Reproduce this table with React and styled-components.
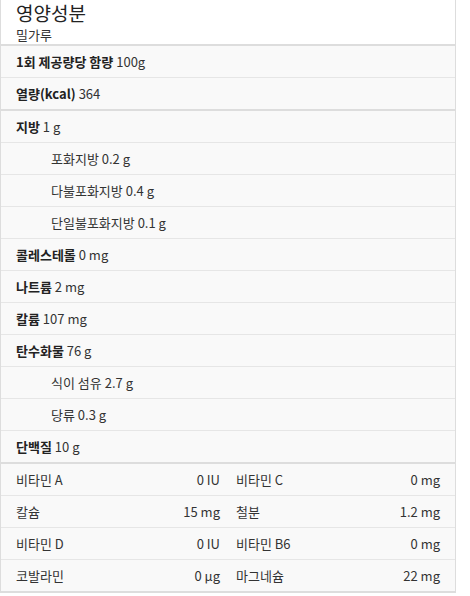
import React from "react";
import styled, { createGlobalStyle } from "styled-components";

const GlobalStyle = createGlobalStyle`
    body {
        margin: 0;
        background: #fff;
        font-family: "Noto Sans CJK KR", "Noto Sans", sans-serif;
        color: #333;
    }
`;

const Panel = styled.section`
    width: 456px;
    box-sizing: border-box;
    border-left: 1px solid #ddd;
    border-right: 1px solid #ddd;
    font-size: 13px;
`;

const Header = styled.header`
    display: flex;
    flex-direction: column;
    height: 46px;
    box-sizing: border-box;
    padding: 0 15px;
    background: #fff;
    border-bottom: 2px solid #ddd;

    h1 {
        margin: 0;
        font-size: 19px;
        font-weight: 400;
        line-height: 26px;
        color: #222;
    }

    p {
        margin: 0;
        font-size: 13px;
        line-height: 18px;
        color: #333;
    }
`;

const Section = styled.div`
    background: #f9f9f9;
    border-bottom: 2px solid #ddd;
`;

const Row = styled.div`
    height: 31px;
    line-height: 31px;
    padding-left: ${props => (props.$sub ? 50 : 15)}px;
    border-bottom: 1px solid #e6e6e6;
    color: #333;
    white-space: nowrap;

    &:last-child {
        border-bottom: none;
    }

    b {
        font-weight: 700;
        color: #222;
    }
`;

const MineralRow = styled.div`
    display: grid;
    grid-template-columns: 1fr 1fr;
    height: 31px;
    line-height: 31px;
    padding: 0 7px;
    border-bottom: 1px solid #e6e6e6;

    &:last-child {
        border-bottom: none;
    }
`;

const Cell = styled.div`
    display: flex;
    justify-content: space-between;
    padding: 0 8px;
    color: #333;
`;

const basics = [
    { label: "1회 제공량당 함량", value: "100g" },
    { label: "열량(kcal)", value: "364" },
];

const nutrients = [
    { label: "지방", value: "1 g" },
    { label: "포화지방", value: "0.2 g", sub: true },
    { label: "다불포화지방", value: "0.4 g", sub: true },
    { label: "단일불포화지방", value: "0.1 g", sub: true },
    { label: "콜레스테롤", value: "0 mg" },
    { label: "나트륨", value: "2 mg" },
    { label: "칼륨", value: "107 mg" },
    { label: "탄수화물", value: "76 g" },
    { label: "식이 섬유", value: "2.7 g", sub: true },
    { label: "당류", value: "0.3 g", sub: true },
    { label: "단백질", value: "10 g" },
];

const minerals = [
    [["비타민 A", "0 IU"], ["비타민 C", "0 mg"]],
    [["칼슘", "15 mg"], ["철분", "1.2 mg"]],
    [["비타민 D", "0 IU"], ["비타민 B6", "0 mg"]],
    [["코발라민", "0 μg"], ["마그네슘", "22 mg"]],
];

export default function App() {
    return (
        <>
            <GlobalStyle />
            <Panel>
                <Header>
                    <h1>영양성분</h1>
                    <p>밀가루</p>
                </Header>
                <Section>
                    {basics.map(item => (
                        <Row key={item.label}>
                            <b>{item.label}</b> {item.value}
                        </Row>
                    ))}
                </Section>
                <Section>
                    {nutrients.map(item => (
                        <Row key={item.label} $sub={item.sub}>
                            {item.sub ? item.label : <b>{item.label}</b>}{" "}
                            {item.value}
                        </Row>
                    ))}
                </Section>
                <Section>
                    {minerals.map(pair => (
                        <MineralRow key={pair[0][0]}>
                            {pair.map(([label, value]) => (
                                <Cell key={label}>
                                    <span>{label}</span>
                                    <span>{value}</span>
                                </Cell>
                            ))}
                        </MineralRow>
                    ))}
                </Section>
            </Panel>
        </>
    );
}
